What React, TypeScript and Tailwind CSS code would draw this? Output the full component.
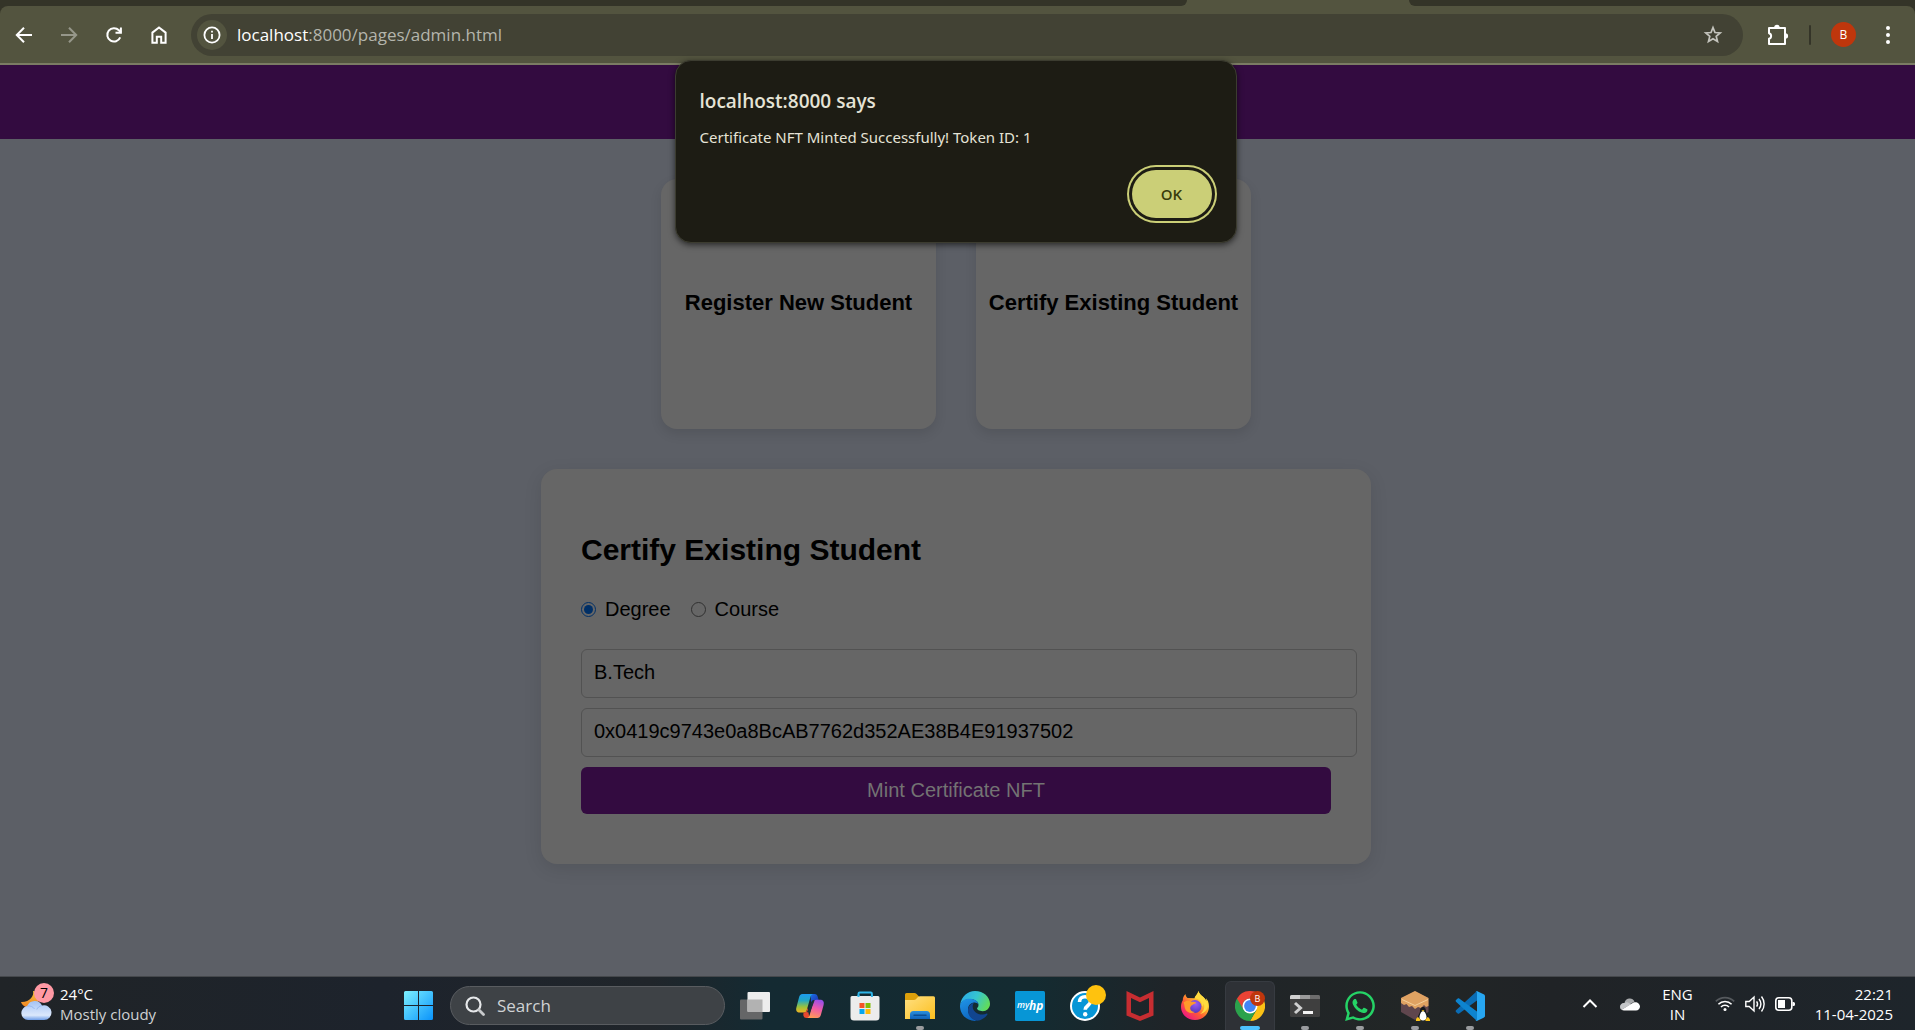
import { useState } from "react";
import type { ReactNode } from "react";
import { FaWhatsapp } from "react-icons/fa";

function BackIcon({ flip = false }: { flip?: boolean }) {
  return (
    <svg viewBox="0 0 20 20" className={flip ? "size-5 -scale-x-100" : "size-5"} fill="none" stroke="currentColor" strokeWidth="2">
      <path d="M18 10H3.5M10 2.8 2.8 10l7.2 7.2" />
    </svg>
  );
}

function ReloadIcon() {
  return (
    <svg viewBox="0 0 20 20" className="size-5" fill="none" stroke="currentColor" strokeWidth="2">
      <path d="M16.2 12.4A6.7 6.7 0 1 1 14.9 5.3l2 2.2" />
      <path d="M16.9 2.6v5.2h-5.4" />
    </svg>
  );
}

function HomeIcon() {
  return (
    <svg viewBox="0 0 20 20" className="size-5" fill="none" stroke="currentColor" strokeWidth="2">
      <path d="M3.4 17.8V7.6L10 2.4l6.6 5.2v10.2h-4.4v-6H7.8v6z" />
    </svg>
  );
}

function InfoIcon() {
  return (
    <svg viewBox="0 0 20 20" className="size-5" fill="none" stroke="currentColor" strokeWidth="1.8">
      <circle cx="10" cy="10" r="7.6" />
      <path d="M10 9v5M10 5.8v1.8" />
    </svg>
  );
}

function StarIcon() {
  return (
    <svg viewBox="0 0 20 20" className="size-5" fill="none" stroke="currentColor" strokeWidth="1.7">
      <path d="m10 2.6 2 4.9 5.2.4-4 3.4 1.3 5.2-4.5-2.8-4.5 2.8 1.3-5.2-4-3.4 5.2-.4z" />
    </svg>
  );
}

function PuzzleIcon() {
  return (
    <svg viewBox="0 0 24 24" className="size-6" fill="none" stroke="currentColor" strokeWidth="2" strokeLinejoin="round">
      <path d="M4 5h16v16H4v-5.200a2.900 2.900 0 0 0 0-5.600z" />
      <path d="M9.200 4.600a2.800 2.800 0 0 1 5.600 0zM20.400 10.200a2.700 2.700 0 0 1 0 5.400z" fill="currentColor" stroke="none" />
    </svg>
  );
}

function DotsIcon() {
  return (
    <svg viewBox="0 0 20 20" className="size-5" fill="currentColor">
      <circle cx="10" cy="3" r="2" />
      <circle cx="10" cy="10" r="2" />
      <circle cx="10" cy="17" r="2" />
    </svg>
  );
}

function WeatherIcon() {
  return (
    <svg viewBox="0 0 36 40" className="h-10 w-9">
      <defs>
        <linearGradient id="moon" x1="0" y1="0" x2="0" y2="1">
          <stop offset="0" stopColor="#f9c440" />
          <stop offset="1" stopColor="#f0821f" />
        </linearGradient>
        <linearGradient id="cloud" x1="0" y1="0" x2="0" y2="1">
          <stop offset="0" stopColor="#a4c3f5" />
          <stop offset="0.75" stopColor="#dbe8fc" />
          <stop offset="1" stopColor="#6f9ee8" />
        </linearGradient>
      </defs>
      <path d="M13 7c1.500 5-3.500 11.500-12 11 1.500 4.500 7 6.500 12 4.500s8-8 6-12C17.500 8 15 7 13 7z" fill="url(#moon)" />
      <path d="M8 36a7 7 0 0 1-.8-13.900A8.200 8.200 0 0 1 22 21.500a7.400 7.400 0 1 1 2 14.500z" fill="url(#cloud)" />
      <path d="M7.200 22.100c3-.6 5.800.5 7.300 2.900M22 21.500c-2.500.4-4.500 2-5.200 4" fill="none" stroke="#8fb2ee" strokeWidth="0.800" />
    </svg>
  );
}

function StartIcon() {
  return (
    <svg viewBox="0 0 30 30" className="size-[30px]">
      <defs>
        <linearGradient id="win" x1="0" y1="0" x2="1" y2="1">
          <stop offset="0" stopColor="#7df1ff" />
          <stop offset="1" stopColor="#0a93fb" />
        </linearGradient>
      </defs>
      <path d="M1.500 0H14v14H0V1.500A1.500 1.500 0 0 1 1.500 0zM15 0h12.500A1.500 1.500 0 0 1 29 1.500V14H15zM0 15h14v14H1.500A1.500 1.500 0 0 1 0 27.500zM15 15h14v12.500a1.500 1.500 0 0 1-1.500 1.500H15z" fill="url(#win)" />
    </svg>
  );
}

function SearchIcon() {
  return (
    <svg viewBox="0 0 20 20" className="size-5" fill="none">
      <circle cx="8.500" cy="8.500" r="7" stroke="#e6e8ea" strokeWidth="2.200" />
      <path d="m13.800 13.800 4.700 4.700" stroke="#c8cacc" strokeWidth="2.800" strokeLinecap="round" />
    </svg>
  );
}

const iconClass = "size-[30px]";

function TaskViewIcon() {
  return (
    <svg viewBox="0 0 30 30" className={iconClass}>
      <rect x="0" y="8.500" width="22.500" height="20" rx="1" fill="#656667" />
      <rect x="7.500" y="1" width="22.500" height="20" rx="1" fill="#ededed" />
      <path d="M7.500 8.500h15V21H8.500a1 1 0 0 1-1-1z" fill="#b2b2b2" />
    </svg>
  );
}

function CopilotIcon() {
  return (
    <svg viewBox="0 0 30 30" className={iconClass}>
      <defs>
        <linearGradient id="cpA" x1="0.300" y1="0" x2="0.300" y2="1">
          <stop offset="0" stopColor="#1d9bf0" />
          <stop offset="0.350" stopColor="#22a7c4" />
          <stop offset="0.700" stopColor="#9cc23a" />
          <stop offset="1" stopColor="#f5b321" />
        </linearGradient>
        <linearGradient id="cpB" x1="0.600" y1="0" x2="0.300" y2="1">
          <stop offset="0" stopColor="#9a4fe8" />
          <stop offset="0.450" stopColor="#ee5aa8" />
          <stop offset="1" stopColor="#ff9a55" />
        </linearGradient>
        <linearGradient id="cpC" x1="0" y1="0" x2="1" y2="1">
          <stop offset="0" stopColor="#1c6fe6" />
          <stop offset="1" stopColor="#1b2fae" />
        </linearGradient>
      </defs>
      <path d="M15.500 3h4c2 0 2.800 1.200 3.300 3l.8 3h-4.200c-2 0-2.800 1-3.300 2.800z" fill="url(#cpC)" />
      <path d="M7.500 3H18c-1.500.4-2.200 1.800-2.700 3.600L11.800 19c-.5 1.800-1.400 2.600-3.200 2.600H4.800C1.800 21.600.6 19.500 1.400 16.500L4 6.500C4.600 4.200 5.500 3 7.500 3z" fill="url(#cpA)" />
      <path d="M8.500 21.600c1.800 0 2.800-.8 3.300-2.600l.7-2.300 2 10.300h-3.200c-2 0-2.500-1.300-3-2.800z" fill="#e8482e" />
      <path d="M22.500 27H12c1.500-.4 2.300-1.800 2.800-3.600L18.200 11.500c.5-1.800 1.400-2.700 3.200-2.700h3.800c3 0 4.200 2.200 3.400 5.200L26 23.500c-.6 2.300-1.500 3.500-3.500 3.500z" fill="url(#cpB)" />
      <path d="M17.800 9.500h1.800l-4.600 11.800h-3.200z" fill="#18323b" />
    </svg>
  );
}

function StoreIcon() {
  return (
    <svg viewBox="0 0 30 30" className={iconClass}>
      <path d="M8.500 7V2.800c0-.7.500-1.200 1.200-1.200h11c.7 0 1.200.5 1.200 1.200V7" fill="none" stroke="#2fb5e8" strokeWidth="2" />
      <path d="M.5 6.500A1.500 1.500 0 0 1 2 5h26a1.500 1.500 0 0 1 1.500 1.500V26a3.500 3.500 0 0 1-3.500 3.500H4A3.500 3.500 0 0 1 .5 26z" fill="#ececec" />
      <path d="M8.500 6V4M21.900 6V4" stroke="#2fb5e8" strokeWidth="2" />
      <path d="M9.500 12h5v5h-5z" fill="#f35325" />
      <path d="M15.500 12h5v5h-5z" fill="#81bc06" />
      <path d="M9.500 18h5v5h-5z" fill="#05a6f0" />
      <path d="M15.500 18h5v5h-5z" fill="#ffba08" />
    </svg>
  );
}

function ExplorerIcon() {
  return (
    <svg viewBox="0 0 30 30" className={iconClass}>
      <defs>
        <linearGradient id="fold" x1="0" y1="0" x2="1" y2="1">
          <stop offset="0" stopColor="#ffe082" />
          <stop offset="1" stopColor="#fcbf1e" />
        </linearGradient>
        <linearGradient id="drawer" x1="0" y1="0" x2="0" y2="1">
          <stop offset="0" stopColor="#2b8fdd" />
          <stop offset="1" stopColor="#0f62ba" />
        </linearGradient>
      </defs>
      <path d="M0 3.500A1.500 1.500 0 0 1 1.500 2h8c.8 0 1.300.3 1.800.8L14 5.500V10H0z" fill="#dca00b" />
      <path d="M0 9h9c.8 0 1.300-.2 1.900-.8L13 6c.6-.6 1.200-.8 2-.8h13.500A1.500 1.500 0 0 1 30 6.700V28H0z" fill="url(#fold)" />
      <path d="M5 28v-4.500A3.500 3.500 0 0 1 8.500 20h13a3.500 3.500 0 0 1 3.500 3.500V28z" fill="url(#drawer)" />
      <path d="M9 24.200h12" stroke="#0b4d94" strokeWidth="1.400" strokeLinecap="round" />
    </svg>
  );
}

function EdgeIcon() {
  return (
    <svg viewBox="0 0 30 30" className={iconClass}>
      <defs>
        <linearGradient id="edTop" x1="0" y1="0.200" x2="1" y2="0.600">
          <stop offset="0" stopColor="#2aa9e8" />
          <stop offset="0.500" stopColor="#36c5d0" />
          <stop offset="1" stopColor="#62dc58" />
        </linearGradient>
        <linearGradient id="edLeft" x1="0.200" y1="0" x2="0.600" y2="1">
          <stop offset="0" stopColor="#1f93e6" />
          <stop offset="1" stopColor="#0c62bd" />
        </linearGradient>
      </defs>
      <path d="M.2 13.500C1.500 5.500 7.500 0 15 0c8.500 0 15 6 15 12.800 0 4.600-3.500 7.400-7.300 7.400-3.800 0-5.700-1.500-5.700-2.600 0-.7 1.500-1.300 1.500-3.500 0-3.500-3.800-6-8.500-6-4.500 0-8 2-9.800 5.400z" fill="url(#edTop)" />
      <path d="M0 15C.2 10.500 4.500 7.800 9.500 7.800c4.800 0 8.600 2.400 9 5.700-1-1.300-2.400-2-4.300-1.900-4 .2-6.200 3.500-6.200 7.200 0 5 3.800 9 8.800 11C7.500 30.800 0 24 0 15z" fill="url(#edLeft)" />
      <path d="M14.200 11.600c-3.200 1-6.200 3.700-6.200 7.900 0 5.500 4.500 10 9.500 10.300 4.300-.7 7.700-3.100 9.900-6.400.4-.6-.1-1.100-.7-.8-1.300.7-2.700 1-4.200 1-5.500 0-9.800-3.500-9.800-7.800 0-1.700.5-3.200 1.500-4.200z" fill="#11458f" />
    </svg>
  );
}

function MyHpIcon() {
  return (
    <svg viewBox="0 0 30 30" className={iconClass}>
      <rect width="30" height="30" rx="1.500" fill="#0796d6" />
      <text x="2" y="17" fontFamily="Open Sans, sans-serif" fontSize="9" fontStyle="italic" fontWeight="600" fill="#fff">my</text>
      <text x="14" y="19" fontFamily="Open Sans, sans-serif" fontSize="12" fontStyle="italic" fontWeight="700" fill="#fff">hp</text>
    </svg>
  );
}

function HelpIcon() {
  return (
    <svg viewBox="0 0 30 30" className={iconClass}>
      <circle cx="15" cy="15" r="14" fill="#0796d6" stroke="#fff" strokeWidth="2" />
      <path d="M9.500 11c0-3.400 2.300-5.200 5.500-5.200s5.500 1.900 5.500 4.700c0 4-5.300 4-5.300 8.300" fill="none" stroke="#fff" strokeWidth="3.600" />
      <circle cx="15.200" cy="23.200" r="2.200" fill="#fff" />
    </svg>
  );
}

function McAfeeIcon() {
  return (
    <svg viewBox="0 0 30 30" className={iconClass}>
      <path d="M1.500 0 15 6.500 28.500 0v24.500L15 30 1.500 24.500zM6 7v14.500l9 3.800 9-3.800V7l-9 4.300z" fill="#c62d31" fillRule="evenodd" />
    </svg>
  );
}

function FirefoxIcon() {
  return (
    <svg viewBox="0 0 30 30" className={iconClass}>
      <defs>
        <linearGradient id="ffx" x1="0.850" y1="0.100" x2="0.200" y2="0.900">
          <stop offset="0" stopColor="#fff04a" />
          <stop offset="0.350" stopColor="#ffb52c" />
          <stop offset="0.650" stopColor="#ff5b34" />
          <stop offset="1" stopColor="#ee1d7c" />
        </linearGradient>
        <radialGradient id="ffg" cx="0.550" cy="0.300" r="0.750">
          <stop offset="0" stopColor="#9a5cf5" />
          <stop offset="1" stopColor="#4f35b8" />
        </radialGradient>
      </defs>
      <path d="M18.500 0c-.7 3-3 4.300-4 7.200L7.500 7C6 5.700 5.600 4.400 5.500 3 3.500 4.700 2.800 7 2.800 9.200 1.500 11.300 1 13.500 1 15.700 1 23.300 7.300 29 15 29s14-5.800 14-13.500c0-3.800-1.300-6.500-3-8.200.3 1.200.3 2 .2 2.700C24.700 5.500 19.300 4.500 18.500 0z" fill="url(#ffx)" />
      <circle cx="15" cy="15.500" r="6.500" fill="url(#ffg)" />
      <path d="M3.500 11.500c2.500-2.200 5.500-2.200 8-.7 1.800-.3 3.600 0 4.700 1-1 1.200-3.200 1.500-4.700 2.700-1 .8-1.700 2.300-1 4 .5 1.300 2 2.500 4.500 2.500-3.500 2.500-8.700.5-10-3.500-.7-2.200-.4-4-1.500-6z" fill="#ff9a2a" />
      <path d="M18.500 0c-.7 3-3 4.300-4 7.200 4.500.3 8 3.700 7.700 8.600 1.300-1.300 1.500-3 1.200-4.300 2 4.500.5 9-3.400 11.500 5-1 8-5 8-9 0-1.300-.8-2.800-1.800-4C24.700 5.500 19.300 4.500 18.500 0z" fill="#ffdb3f" />
    </svg>
  );
}

function ChromeIcon() {
  return (
    <svg viewBox="0 0 30 30" className={iconClass}>
      <path d="M28 7.500H15l6.500 11.200L15 30A15 15 0 0 0 28 7.500z" fill="#fbc116" />
      <path d="M2 7.500A15 15 0 0 0 15 30l6.500-11.300L15 15z" fill="#2ba24c" />
      <path d="M2 7.500A15 15 0 0 1 28 7.500H15A7.500 7.500 0 0 0 8.500 18.700z" fill="#ea4335" />
      <circle cx="15" cy="15" r="7.500" fill="#fff" />
      <circle cx="15" cy="15" r="5.900" fill="#4285f4" />
    </svg>
  );
}

function TerminalIcon() {
  return (
    <svg viewBox="0 0 30 30" className={iconClass}>
      <rect y="4" width="30" height="22" rx="1.500" fill="#3f3f3f" />
      <path d="M0 8V5.500A1.500 1.500 0 0 1 1.500 4H10v4z" fill="#cfcfcf" />
      <path d="M10 4h10v4H10z" fill="#9a9a9a" />
      <path d="M20 4h8.500A1.500 1.500 0 0 1 30 5.500V8H20z" fill="#6d6d6d" />
      <path d="m5 12 5.500 5L5 22" fill="none" stroke="#cfcfcf" strokeWidth="3" />
      <path d="M13 20h10v3H13z" fill="#f3f3f3" />
    </svg>
  );
}

function CrateIcon() {
  return (
    <svg viewBox="0 0 30 30" className={iconClass}>
      <path d="m15 0 13.500 7v14L15 29 1 21V7z" fill="#5f464d" />
      <path d="M15 0 28.500 7v8l-2.500 1-2-2-3 3-3-1-3 2-3-3-3 1-2.500-3L4 14l-3-2V7z" fill="#dfa262" />
      <path d="m2 8.500 13 6 13-6" fill="none" stroke="#f8d9a8" strokeWidth="0.800" />
      <path d="M23 16c-2.500 0-3 2.500-3 4.500 0 1.800-2.500 4-2.500 7.500h11c0-3.500-2.500-5.700-2.500-7.500 0-2-.5-4.500-3-4.500z" fill="#14181b" />
      <path d="M23 20c1.800 0 3.500 4 3.500 6s-1.500 3.500-3.500 3.500-3.500-1.500-3.500-3.500 1.700-6 3.500-6z" fill="#fff" />
      <path d="M16 30c-.5-1.500.8-3.500 2-4l3 3-1.500 1zM30 30c.3-1.500-.8-3.500-2.300-4L25 29l1 1zM21.500 19.200l3 0-1.500 1.600z" fill="#fcc419" />
    </svg>
  );
}

function VsCodeIcon() {
  return (
    <svg viewBox="0 0 30 30" className={iconClass}>
      <path d="M22 0 1 19.300c-.5.5-.5 1.200 0 1.700l1.700 1.500c.4.400 1 .4 1.500.1L24 8z" fill="#0a6cb4" />
      <path d="M22 30 1 10.700c-.5-.5-.5-1.200 0-1.700l1.700-1.500c.4-.4 1-.4 1.500-.1L24 22z" fill="#0d84cf" />
      <path d="M21.800 29.900c-.7.200-1.300 0-1.800-.5.700.7 2 .2 2-.8V1.400c0-1-1.300-1.500-2-.8.500-.5 1.100-.7 1.800-.5l6.800 3.200c.8.400 1.400 1.100 1.400 2v19.400c0 .9-.6 1.600-1.400 2z" fill="#27a6f1" />
    </svg>
  );
}

type TaskApp = { name: string; icon: ReactNode; open?: boolean; active?: boolean; badge?: ReactNode };

const apps: TaskApp[] = [
  { name: "Task view", icon: <TaskViewIcon /> },
  { name: "Copilot", icon: <CopilotIcon /> },
  { name: "Microsoft Store", icon: <StoreIcon /> },
  { name: "File Explorer", icon: <ExplorerIcon />, open: true },
  { name: "Edge", icon: <EdgeIcon /> },
  { name: "myHP", icon: <MyHpIcon /> },
  {
    name: "Support Assistant",
    icon: <HelpIcon />,
    badge: <span className="absolute top-2 right-1.5 size-5 rounded-full bg-[#ffc20e]" />,
  },
  { name: "McAfee", icon: <McAfeeIcon /> },
  { name: "Firefox", icon: <FirefoxIcon /> },
  {
    name: "Chrome",
    icon: <ChromeIcon />,
    open: true,
    active: true,
    badge: (
      <span className="absolute top-3.5 right-3 flex size-[15px] items-center justify-center rounded-full bg-[#bf360c] text-[9px] leading-none text-white">
        B
      </span>
    ),
  },
  { name: "Terminal", icon: <TerminalIcon />, open: true },
  { name: "WhatsApp", icon: <FaWhatsapp className="size-[34px] text-[#25d366]" />, open: true },
  { name: "Linux container", icon: <CrateIcon />, open: true },
  { name: "Visual Studio Code", icon: <VsCodeIcon />, open: true },
];

function TaskButton({ app }: { app: TaskApp }) {
  return (
    <button type="button" aria-label={app.name} className="relative flex h-full w-[55px] justify-center pt-1">
      <span
        className={
          app.active
            ? "flex h-full w-[50px] items-center justify-center rounded-t-md border border-b-0 border-[#373b41] bg-[#2e3136]"
            : "flex h-full w-[50px] items-center justify-center"
        }
      >
        {app.icon}
      </span>
      {app.badge}
      {app.open && (
        <span
          className={
            app.active
              ? "absolute bottom-0 h-1 w-5 rounded-full bg-[#4cc2ff]"
              : "absolute bottom-0 h-1 w-2 rounded-full bg-[#9a9c9f]"
          }
        />
      )}
    </button>
  );
}

function BrowserBar() {
  return (
    <header className="border-b-2 border-[#7b7c64] bg-[#343428]">
      <div className="flex h-1.5 bg-[#53543f]">
        <div className="w-[62%] rounded-br-xl bg-[#343428]" />
        <div className="flex-1" />
        <div className="w-[26.4%] rounded-bl-xl bg-[#343428]" />
      </div>
      <div className="flex h-[57px] items-center rounded-t-lg bg-[#53543f] pr-[17px] pl-3.5 text-white">
        <div className="flex items-center gap-[25px]">
          <button type="button" aria-label="Back"><BackIcon /></button>
          <button type="button" aria-label="Forward" className="text-[#96978a]"><BackIcon flip /></button>
          <button type="button" aria-label="Reload"><ReloadIcon /></button>
          <button type="button" aria-label="Home"><HomeIcon /></button>
        </div>
        <div className="ml-[22px] flex h-[42px] flex-1 items-center rounded-full bg-[#424234] pr-5 pl-1.5">
          <button type="button" aria-label="Site information" className="flex size-[30px] items-center justify-center rounded-full bg-[#53543f]">
            <InfoIcon />
          </button>
          <p className="ml-2.5 flex-1 text-[17px] leading-6 text-[#b4b5ac]">
            <span className="text-white">localhost</span>:8000/pages/admin.html
          </p>
          <button type="button" aria-label="Bookmark this tab" className="text-[#c4c4bd]"><StarIcon /></button>
        </div>
        <button type="button" aria-label="Extensions" className="ml-[22px]"><PuzzleIcon /></button>
        <div className="ml-5 h-5 w-0.5 rounded bg-[#343428]" />
        <button type="button" aria-label="Profile" className="ml-5 flex size-[25px] items-center justify-center rounded-full bg-[#bf360c] text-xs">
          B
        </button>
        <button type="button" aria-label="Menu" className="ml-[22px]"><DotsIcon /></button>
      </div>
    </header>
  );
}

function Alert() {
  return (
    <div className="absolute inset-x-0 top-[60px] flex justify-center pr-1">
      <div
        role="alertdialog"
        aria-labelledby="alert-title"
        aria-describedby="alert-text"
        className="flex w-[562px] flex-col rounded-2xl border border-[#3c3c30] bg-[#1d1c14] px-6 pt-6 pb-6 text-[#e5e3d6] shadow-[0_2px_6px_rgba(0,0,0,0.6)]"
      >
        <h1 id="alert-title" className="text-[19px] leading-8 font-semibold">localhost:8000 says</h1>
        <p id="alert-text" className="mt-2 font-['Noto_Sans',sans-serif] text-[15px] leading-6">Certificate NFT Minted Successfully! Token ID: 1</p>
        <button
          type="button"
          className="mt-[21px] h-[48px] w-20 self-end rounded-full bg-[#cbcf77] text-[15px] font-semibold text-[#3a3c0c] ring-2 ring-[#cbcf77] ring-offset-3 ring-offset-[#1d1c14]"
        >
          OK
        </button>
      </div>
    </div>
  );
}

function OptionCard({ title }: { title: string }) {
  return (
    <button
      type="button"
      className="h-[250px] w-[275px] rounded-2xl bg-[#666666] pb-1 text-[22px] font-bold whitespace-nowrap text-black shadow-[0_5px_12px_rgba(0,0,0,0.1)]"
    >
      {title}
    </button>
  );
}

function CertifyForm() {
  const [kind, setKind] = useState("degree");
  const [title, setTitle] = useState("B.Tech");
  const [wallet, setWallet] = useState("0x0419c9743e0a8BcAB7762d352AE38B4E91937502");
  const field = "h-[49px] w-[calc(100%+26px)] rounded-md border border-[#525252] bg-[#666666] px-3 pb-0.5 text-xl text-black";
  return (
    <form
      onSubmit={(e) => e.preventDefault()}
      className="mt-10 w-full max-w-[830px] rounded-2xl bg-[#666666] px-10 pt-[65px] pb-[50px] text-xl text-black shadow-[0_5px_18px_rgba(0,0,0,0.1)]"
    >
      <h2 className="text-3xl leading-8 font-bold">Certify Existing Student</h2>
      <div className="mt-[31px] flex h-6 items-center gap-5">
        <label className="flex items-center gap-[9px]">
          <input type="radio" name="kind" className="size-[15px] brightness-40" checked={kind === "degree"} onChange={() => setKind("degree")} />
          Degree
        </label>
        <label className="flex items-center gap-[9px]">
          <input type="radio" name="kind" className="size-[15px] brightness-40" checked={kind === "course"} onChange={() => setKind("course")} />
          Course
        </label>
      </div>
      <div className="mt-7 flex flex-col gap-2.5">
        <input aria-label="Degree name" className={field} value={title} onChange={(e) => setTitle(e.target.value)} />
        <input aria-label="Wallet address" className={field} value={wallet} onChange={(e) => setWallet(e.target.value)} />
        <button type="submit" className="h-[47px] rounded-md bg-[#330b40] pb-0.5 text-[#737373]">Mint Certificate NFT</button>
      </div>
    </form>
  );
}

function Tray() {
  return (
    <div className="flex flex-1 items-center justify-end pr-[22px] text-[15px] leading-5 text-white">
      <button type="button" aria-label="Hidden icons">
        <svg viewBox="0 0 20 20" className="size-5" fill="none" stroke="#fff" strokeWidth="2"><path d="m3.500 13 6.500-6.500 6.500 6.500" /></svg>
      </button>
      <button type="button" aria-label="OneDrive" className="ml-5">
        <svg viewBox="0 0 20 20" className="size-5">
          <path d="M4.500 9a5.300 5.300 0 0 1 10-1.500L7 12z" fill="#a9abad" />
          <path d="M4.500 9C2 8.500 0 10.500 0 12.700c0 1.500.7 2.500 1.600 3.100L11 10.300 8 8.500C7 8 5.500 8 4.500 9z" fill="#c4c6c8" />
          <path d="M1.600 15.800 14 8.300c3-.8 6 1.300 6 4.200 0 2.300-1.700 4-4 4H4c-1 0-1.700-.2-2.400-.7z" fill="#fff" />
        </svg>
      </button>
      <div className="ml-[22px] text-center"><p>ENG</p><p>IN</p></div>
      <button type="button" aria-label="Network, sound and battery" className="ml-[22px] flex items-center gap-2.5">
        <svg viewBox="0 0 20 20" className="size-5" fill="none" stroke="#fff" strokeWidth="1.600">
          <path d="M.8 7.400a13 13 0 0 1 18.400 0" stroke="#55595d" />
          <path d="M3.400 10.200a9.300 9.300 0 0 1 13.200 0M6 13a5.600 5.600 0 0 1 8 0" />
          <circle cx="10" cy="15.500" r="1.500" fill="#fff" stroke="none" />
        </svg>
        <svg viewBox="0 0 20 20" className="size-5" fill="none" stroke="#fff" strokeWidth="1.400">
          <path d="M.8 7.500h3.400L9 3v14l-4.800-4.500H.8z" />
          <path d="M11.600 7.300c1.200 1.700 1.200 3.700 0 5.400M14 5c2.300 3 2.300 7 0 10M16.500 2.500c3.500 4.500 3.500 10.500 0 15" />
        </svg>
        <svg viewBox="0 0 20 20" className="size-5">
          <rect x="0.800" y="3.800" width="16" height="12.400" rx="3" fill="none" stroke="#fff" strokeWidth="1.600" />
          <path d="M3 6h7v8H3zM17.500 8h1A1.500 1.500 0 0 1 20 9.500v1a1.500 1.500 0 0 1-1.500 1.500h-1z" fill="#fff" />
        </svg>
      </button>
      <div className="ml-5 text-right"><p>22:21</p><p>11-04-2025</p></div>
    </div>
  );
}

function Taskbar() {
  return (
    <footer className="flex h-[54px] border-t border-[#45484c] bg-[linear-gradient(90deg,#202427_0%,#1d232c_20%,#20252a_34%,#142a32_40%,#142b31_54%,#1f2428_61%,#222626_74%,#202326_81%,#1e252b_100%)]">
      <div className="flex flex-1 items-center pl-5 text-white">
        <div className="relative">
          <WeatherIcon />
          <span className="absolute -top-px left-3.5 flex size-5 items-center justify-center rounded-full bg-[#ff99a4] text-sm text-black">7</span>
        </div>
        <div className="ml-1 text-[15px] leading-5">
          <p>24°C</p>
          <p className="text-[#cfd1d3]">Mostly cloudy</p>
        </div>
      </div>
      <div className="flex items-center pr-3">
        <button type="button" aria-label="Start" className="pt-1"><StartIcon /></button>
        <label className="mt-1 mr-0.5 ml-4 flex h-[39px] w-[275px] items-center rounded-full border border-[#595c60] bg-[#3e4246] pl-3.5">
          <SearchIcon />
          <input aria-label="Search" placeholder="Search" className="ml-3 w-48 bg-transparent text-[17px] placeholder:text-[#d0d2d4]" />
        </label>
        {apps.map((app) => (
          <TaskButton key={app.name} app={app} />
        ))}
      </div>
      <Tray />
    </footer>
  );
}

export default function App() {
  return (
    <div className="relative flex min-h-screen flex-col bg-[#5c5f66] font-['Open_Sans',sans-serif]">
      <BrowserBar />
      <div className="h-[74px] bg-[#330b40]" />
      <main className="flex flex-1 flex-col items-center py-10 pr-[3px] font-['Liberation_Sans',Arial,sans-serif]">
        <div className="flex gap-10">
          <OptionCard title="Register New Student" />
          <OptionCard title="Certify Existing Student" />
        </div>
        <CertifyForm />
      </main>
      <Alert />
      <Taskbar />
    </div>
  );
}
